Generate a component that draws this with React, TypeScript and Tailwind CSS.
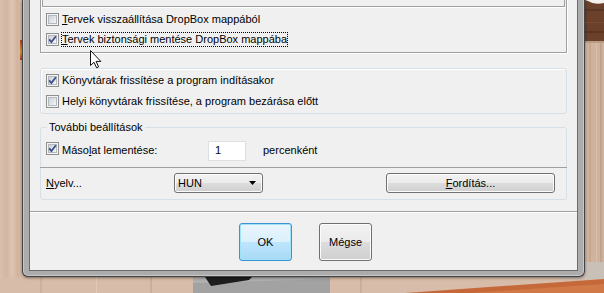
import React from "react";

function Check({ checked }: { checked?: boolean }) {
  return (
    <svg width="13" height="13" viewBox="0 0 13 13" className="shrink-0">
      <defs>
        <linearGradient id="cbFill" x1="0" y1="0" x2="1" y2="1">
          <stop offset="0" stopColor="#c9ced4" />
          <stop offset="1" stopColor="#f8f8f8" />
        </linearGradient>
      </defs>
      <rect x="0.5" y="0.5" width="12" height="12" fill="#f5f5f5" stroke="#8e8f8f" />
      <rect x="2.5" y="2.5" width="8" height="8" fill="url(#cbFill)" stroke="#b5b9bf" />
      {checked && (
        <path d="M3.2 6.4 L5.4 9.1 L9.9 3.2" fill="none" stroke="#3b4f8f" strokeWidth="1.8" />
      )}
    </svg>
  );
}

function CheckRow({
  checked,
  focused,
  children,
  className = "",
}: {
  checked?: boolean;
  focused?: boolean;
  children: React.ReactNode;
  className?: string;
}) {
  return (
    <div className={`flex items-center pl-[5px] ${className}`}>
      <Check checked={checked} />
      <span
        className={`ml-[2px] leading-[13px] border ${
          focused ? "border-dotted border-black" : "border-transparent"
        }`}
      >
        {children}
      </span>
    </div>
  );
}

const grayBtn =
  "border border-[#707070] rounded-[3px] bg-[linear-gradient(180deg,#f2f2f2_0%,#ebebeb_50%,#dddddd_50%,#cfcfcf_100%)] shadow-[inset_0_0_0_1px_#fbfbfb]";

function Cursor() {
  return (
    <svg
      width="13"
      height="19"
      viewBox="0 0 13 19"
      className="absolute left-[90px] top-[50px] z-20"
    >
      <path
        d="M0.5 0.5 L0.5 15.5 L4 12.2 L6.6 17.8 L8.6 16.9 L6.1 11.4 L10.8 11.4 Z"
        fill="#fff"
        stroke="#111"
        strokeWidth="1"
        strokeLinejoin="miter"
      />
    </svg>
  );
}

function RightWall() {
  return (
    <svg width="19" height="277" viewBox="0 0 19 277" className="block shrink-0">
      <rect x="0" y="0" width="19" height="277" fill="#cfb39f" />
      <rect x="0" y="0" width="19" height="41" fill="#6b412b" />
      <rect x="0" y="9" width="19" height="2" fill="#5c3624" />
      <rect x="0" y="22" width="19" height="1" fill="#7a4c33" />
      <rect x="0" y="31" width="19" height="2" fill="#5a3523" />
      <path d="M0 0 L19 0 L19 3 Q9 5 3 1 Z" fill="#f4f1ee" />
      <rect x="0" y="41" width="19" height="2" fill="#b99a84" />
      <rect x="4" y="43" width="2" height="220" fill="#c6a892" />
      <rect x="11" y="43" width="1" height="220" fill="#d8bfad" />
      <rect x="15" y="43" width="2" height="220" fill="#c2a38d" />
      <rect x="0" y="262" width="19" height="15" fill="#c9c0b8" />
    </svg>
  );
}

function BottomStrip() {
  return (
    <svg width="604" height="16" viewBox="0 0 604 16" className="block">
      <rect x="0" y="0" width="604" height="16" fill="#d7bda9" />
      <rect x="40" y="0" width="2" height="16" fill="#ccb09b" />
      <rect x="96" y="0" width="1" height="16" fill="#e0c9b8" />
      <rect x="150" y="0" width="2" height="16" fill="#cbae99" />
      <path d="M193 0 L330 0 L330 16 L193 16 Z" fill="#b3b1b0" />
      <path d="M193 6 L330 2 L330 16 L193 16 Z" fill="#a3a2a2" />
      <path d="M205 0 L252 0 L249 3 L211 9 Z" fill="#1e1e1e" />
      <rect x="360" y="0" width="2" height="16" fill="#ccae98" />
      <path d="M560 0 L604 0 L604 2 L560 2 Z" fill="#c9c0b8" />
      <path d="M405 16 L604 2 L604 16 Z" fill="#c5693b" />
      <path d="M470 16 L604 7 L604 16 Z" fill="#d27a47" />
    </svg>
  );
}

export default function App() {
  return (
    <div className="relative w-[604px] h-[293px] overflow-hidden flex flex-col bg-[#d7bda9] font-['Liberation_Sans',Arial,sans-serif] text-[11px] text-black">
      <div className="flex h-[277px]">
        {/* desktop wallpaper, left side */}
        <div className="w-[22px] shrink-0 flex flex-col bg-[linear-gradient(90deg,#d9c0ad,#d3b6a1_30%,#ddc5b3_55%,#d1b39e_80%,#d8bda9)]">
          <div className="h-[40px]" />
          <div className="ml-[20px] w-[2px] h-[20px] bg-[linear-gradient(180deg,#c43d2f,#d8a23a_60%,#b8362a)]" />
        </div>

        {/* window frame */}
        <div className="relative z-10 w-[563px] h-[277px] shrink-0 border-x border-b border-[#444] rounded-b-[6px] bg-[#acacac] shadow-[inset_1px_0_0_#c8c8c8,inset_-1px_0_0_#c8c8c8,inset_0_-1px_0_#c8c8c8,0_1px_3px_rgba(0,0,0,0.45)] px-[6px] pb-[5px] flex">
          <div className="flex-1 border-x border-b border-[#6c6c6c] bg-[#f0f0f0] flex flex-col">
            {/* DropBox box, top cut off */}
            <div className="ml-[10px] w-[527px] -mt-[10px] h-[63px] border border-[#a0a0a0] shadow-[inset_1px_1px_0_#fff,1px_1px_0_#fff] flex flex-col">
              <div className="mx-px h-[16px] border-x border-b border-[#a0a0a0] shadow-[0_1px_0_#fff]" />
              <div className="mt-[2px] flex flex-col">
                <CheckRow className="h-[20px]">
                  <span className="underline">T</span>ervek visszaállítása DropBox mappából
                </CheckRow>
                <CheckRow className="h-[20px]" checked focused>
                  <span className="underline">T</span>ervek biztonsági mentése DropBox mappába
                </CheckRow>
              </div>
            </div>

            {/* library refresh */}
            <div className="ml-[10px] w-[527px] mt-[15px] h-[46px] border border-[#d5dfe5] rounded-[3px] shadow-[inset_1px_1px_0_#fff] pt-px flex flex-col">
              <CheckRow className="h-[21px]" checked>
                Könyvtárak frissítése a program indításakor
              </CheckRow>
              <CheckRow className="h-[21px]">
                Helyi könyvtárak frissítése, a program bezárása előtt
              </CheckRow>
            </div>

            {/* further settings */}
            <fieldset className="ml-[10px] w-[527px] mt-[7px] h-[79px] border border-[#d5dfe5] rounded-[3px] flex flex-col">
              <legend className="ml-[6px] px-[2px] leading-[13px]">További beállítások</legend>
              <div className="mt-[6px] h-[21px] flex items-center pl-[5px]">
                <div className="self-start mt-[2px]">
                  <Check checked />
                </div>
                <span className="ml-[3px] w-[146px]">
                  Máso<span className="underline">l</span>at lementése:
                </span>
                <div className="w-[38px] h-[20px] bg-white border border-[#dcdfe4] pl-[6px] flex items-center">
                  1
                </div>
                <span className="ml-[17px]">percenként</span>
              </div>
              <div className="mt-[6px] -mx-px h-px bg-[#a0a0a0]" />
              <div className="mt-[5px] h-[20px] flex items-center pl-[5px]">
                <span className="w-[128px]">
                  <span className="underline">N</span>yelv...
                </span>
                <div className={`w-[89px] h-[20px] ${grayBtn} flex items-center pl-[3px] pr-[6px]`}>
                  <span className="flex-1">HUN</span>
                  <svg width="7" height="4" viewBox="0 0 7 4">
                    <path d="M0 0 L7 0 L3.5 4 Z" fill="#000" />
                  </svg>
                </div>
                <button className={`ml-[123px] w-[169px] h-[20px] ${grayBtn} flex items-center justify-center`}>
                  <span>
                    <span className="underline">F</span>ordítás...
                  </span>
                </button>
              </div>
            </fieldset>

            <div className="mt-[11px] h-px bg-[#a0a0a0]" />
            <div className="h-px bg-white" />

            <div className="mt-[10px] flex">
              <button className="ml-[209px] w-[53px] h-[38px] border border-[#3c93d4] rounded-[3px] bg-[linear-gradient(180deg,#eaf6fd_0%,#d9f0fc_50%,#bee6fd_50%,#a7d9f5_100%)] shadow-[inset_0_0_0_1px_#9fe2fa] flex items-center justify-center">
                OK
              </button>
              <button className={`ml-[27px] w-[53px] h-[38px] ${grayBtn} flex items-center justify-center`}>
                Mégse
              </button>
            </div>
          </div>
        </div>

        <RightWall />
      </div>
      <BottomStrip />
      <Cursor />
    </div>
  );
}
